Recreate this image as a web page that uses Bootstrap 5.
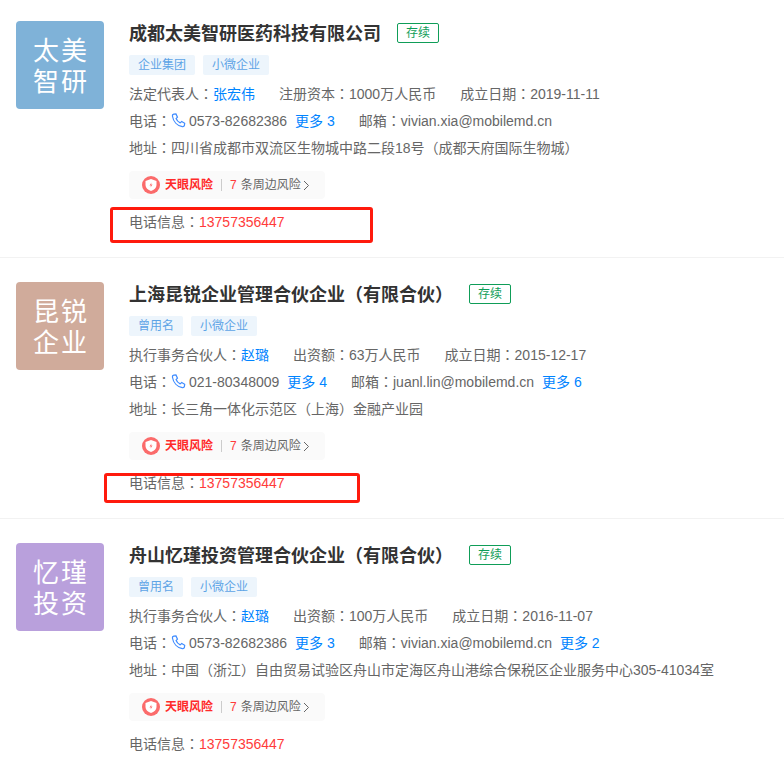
<!DOCTYPE html>
<html lang="zh-CN">
<head>
<meta charset="utf-8">
<title>企业列表</title>
<link href="https://cdn.jsdelivr.net/npm/bootstrap@5.3.0/dist/css/bootstrap.min.css" rel="stylesheet">
<style>
html,body{background:#fff;}
body{font-family:"Liberation Sans","Noto Sans CJK SC",sans-serif;font-size:14px;color:#666;overflow:hidden;height:777px;}
.cp{font-family:"Noto Sans CJK TC",sans-serif;line-height:0;}
.pa{font-family:"Noto Sans CJK KR",sans-serif;line-height:0;}
.co-list{margin-top:-3px;}
.co-item{position:relative;padding:24px 16px 0 16px;height:261px;border-bottom:1px solid #f2f2f2;}
.co-logo{width:88px;height:88px;border-radius:4px;color:#fff;font-size:26px;line-height:31px;letter-spacing:2px;padding:15px 0 0 2px;text-align:center;flex:none;}
.logo-blue{background:#7fb2d8;}
.logo-tan{background:#d0ab9b;}
.logo-purple{background:#b9a0dc;}
.co-main{margin-left:25px;min-width:0;}
.co-title{font-size:18px;font-weight:700;color:#333;line-height:24px;height:24px;margin:1px 0 -1px;white-space:nowrap;}
.co-status{border:1px solid #0f9d58;color:#0f9d58;font-size:12px;line-height:18px;height:20px;padding:0 8px;border-radius:2px;margin-left:16px;margin-top:2px;}
.co-tags{margin-top:10px;gap:8px;}
.co-tag{background:#edf5fc;color:#5ea4e6;font-size:12px;line-height:20px;height:20px;padding:0 9px;border-radius:2px;}
.co-line{line-height:27px;height:27px;white-space:nowrap;}
.co-lines{margin-top:6px;}
.co-gap{margin-left:24px;}
.co-more{margin-left:8px;}
.co-line a,.co-more{color:#0084ff;text-decoration:none;}
.ico-phone{width:15px;height:15px;vertical-align:-2px;margin-right:3px;}
.co-risk{display:inline-flex;align-items:center;height:28px;width:196px;margin-top:9px;padding-left:13px;background:#fafafa;border-radius:4px;font-size:12px;color:#666;}
.risk-name{color:#ff2a2a;font-weight:700;margin-left:5px;}
.risk-sep{width:1px;height:12px;background:#ccc;margin:0 8px;}
.risk-num{color:#ff3b3b;margin-right:4px;}
.risk-chev{width:7px;height:11px;margin-left:2px;}
.co-phone{line-height:20px;margin-top:12px;}
.co-phone span.cv{color:#ff3b3b;}
.mark-box{position:absolute;border:3px solid #ff1a0d;border-radius:3px;pointer-events:none;}
.mark-one{left:110px;top:210px;width:263px;height:36px;}
.mark-two{left:104px;top:215px;width:256px;height:30px;}
</style>
</head>
<body>
<div class="co-list">

<div class="co-item d-flex">
  <div class="co-logo logo-blue">太美<br>智研</div>
  <div class="co-main">
    <div class="d-flex align-items-start"><h2 class="co-title">成都太美智研医药科技有限公司</h2><span class="co-status">存续</span></div>
    <div class="co-tags d-flex"><span class="co-tag">企业集团</span><span class="co-tag">小微企业</span></div>
    <div class="co-lines">
      <div class="co-line">法定代表人<span class="cp" lang="zh-TW">：</span><a href="#">张宏伟</a><span class="co-gap">注册资本<span class="cp" lang="zh-TW">：</span>1000万人民币</span><span class="co-gap">成立日期<span class="cp" lang="zh-TW">：</span>2019-11-11</span></div>
      <div class="co-line">电话<span class="cp" lang="zh-TW">：</span><svg class="ico-phone" viewBox="0 0 16 16" fill="none" stroke="#3f8cff" stroke-width="1.3"><path d="M3 1.2 5.3 1l1.6 3.4-1.5 1.5c.7 1.900 2.300 3.600 4.400 4.600l1.600-1.400 3.200 1.900-.3 2.300c-.2.9-1.200 1.500-2.200 1.300C6.700 13.500 2.400 9 1.500 3.200 1.400 2.200 2 1.400 3 1.200Z"/></svg>0573-82682386<a class="co-more" href="#">更多 3</a><span class="co-gap">邮箱<span class="cp" lang="zh-TW">：</span>vivian.xia@mobilemd.cn</span></div>
      <div class="co-line">地址<span class="cp" lang="zh-TW">：</span>四川省成都市双流区生物城中路二段18号<span class="pa" lang="ko">（</span>成都天府国际生物城<span class="pa" lang="ko">）</span></div>
    </div>
    <div class="co-risk"><svg width="18" height="18" viewBox="0 0 18 18"><circle cx="9" cy="9" r="9" fill="#fb6b6b"/><path d="M9 3 14.500 5v4c0 3-2.400 4.900-5.500 6C5.900 13.900 3.500 12 3.500 9V5Z" fill="#fff"/><path d="M9.500 6.500 7.500 9.500H9L8.500 11.500 10.500 8.500H9Z" fill="#fb6b6b"/></svg><span class="risk-name">天眼风险</span><i class="risk-sep"></i><span class="risk-num">7</span>条周边风险<svg class="risk-chev" viewBox="0 0 7 11" fill="none" stroke="#666"><path d="M1 1l4.500 4.500L1 10"/></svg></div>
    <div class="co-phone">电话信息<span class="cp" lang="zh-TW">：</span><span class="cv">13757356447</span></div>
  </div>
  <div class="mark-box mark-one"></div>
</div>

<div class="co-item d-flex">
  <div class="co-logo logo-tan">昆锐<br>企业</div>
  <div class="co-main">
    <div class="d-flex align-items-start"><h2 class="co-title">上海昆锐企业管理合伙企业<span class="pa" lang="ko">（</span>有限合伙<span class="pa" lang="ko">）</span></h2><span class="co-status">存续</span></div>
    <div class="co-tags d-flex"><span class="co-tag">曾用名</span><span class="co-tag">小微企业</span></div>
    <div class="co-lines">
      <div class="co-line">执行事务合伙人<span class="cp" lang="zh-TW">：</span><a href="#">赵璐</a><span class="co-gap">出资额<span class="cp" lang="zh-TW">：</span>63万人民币</span><span class="co-gap">成立日期<span class="cp" lang="zh-TW">：</span>2015-12-17</span></div>
      <div class="co-line">电话<span class="cp" lang="zh-TW">：</span><svg class="ico-phone" viewBox="0 0 16 16" fill="none" stroke="#3f8cff" stroke-width="1.3"><path d="M3 1.2 5.3 1l1.6 3.4-1.5 1.5c.7 1.900 2.300 3.600 4.400 4.600l1.600-1.400 3.200 1.900-.3 2.300c-.2.9-1.200 1.500-2.200 1.300C6.700 13.500 2.400 9 1.500 3.200 1.400 2.200 2 1.400 3 1.200Z"/></svg>021-80348009<a class="co-more" href="#">更多 4</a><span class="co-gap">邮箱<span class="cp" lang="zh-TW">：</span>juanl.lin@mobilemd.cn</span><a class="co-more" href="#">更多 6</a></div>
      <div class="co-line">地址<span class="cp" lang="zh-TW">：</span>长三角一体化示范区<span class="pa" lang="ko">（</span>上海<span class="pa" lang="ko">）</span>金融产业园</div>
    </div>
    <div class="co-risk"><svg width="18" height="18" viewBox="0 0 18 18"><circle cx="9" cy="9" r="9" fill="#fb6b6b"/><path d="M9 3 14.500 5v4c0 3-2.400 4.900-5.500 6C5.900 13.900 3.500 12 3.500 9V5Z" fill="#fff"/><path d="M9.500 6.500 7.500 9.500H9L8.500 11.500 10.500 8.500H9Z" fill="#fb6b6b"/></svg><span class="risk-name">天眼风险</span><i class="risk-sep"></i><span class="risk-num">7</span>条周边风险<svg class="risk-chev" viewBox="0 0 7 11" fill="none" stroke="#666"><path d="M1 1l4.500 4.500L1 10"/></svg></div>
    <div class="co-phone">电话信息<span class="cp" lang="zh-TW">：</span><span class="cv">13757356447</span></div>
  </div>
  <div class="mark-box mark-two"></div>
</div>

<div class="co-item d-flex">
  <div class="co-logo logo-purple">忆瑾<br>投资</div>
  <div class="co-main">
    <div class="d-flex align-items-start"><h2 class="co-title">舟山忆瑾投资管理合伙企业<span class="pa" lang="ko">（</span>有限合伙<span class="pa" lang="ko">）</span></h2><span class="co-status">存续</span></div>
    <div class="co-tags d-flex"><span class="co-tag">曾用名</span><span class="co-tag">小微企业</span></div>
    <div class="co-lines">
      <div class="co-line">执行事务合伙人<span class="cp" lang="zh-TW">：</span><a href="#">赵璐</a><span class="co-gap">出资额<span class="cp" lang="zh-TW">：</span>100万人民币</span><span class="co-gap">成立日期<span class="cp" lang="zh-TW">：</span>2016-11-07</span></div>
      <div class="co-line">电话<span class="cp" lang="zh-TW">：</span><svg class="ico-phone" viewBox="0 0 16 16" fill="none" stroke="#3f8cff" stroke-width="1.3"><path d="M3 1.2 5.3 1l1.6 3.4-1.5 1.5c.7 1.900 2.300 3.600 4.400 4.600l1.600-1.400 3.200 1.900-.3 2.300c-.2.9-1.200 1.500-2.200 1.300C6.700 13.500 2.400 9 1.500 3.200 1.400 2.200 2 1.400 3 1.200Z"/></svg>0573-82682386<a class="co-more" href="#">更多 3</a><span class="co-gap">邮箱<span class="cp" lang="zh-TW">：</span>vivian.xia@mobilemd.cn</span><a class="co-more" href="#">更多 2</a></div>
      <div class="co-line">地址<span class="cp" lang="zh-TW">：</span>中国<span class="pa" lang="ko">（</span>浙江<span class="pa" lang="ko">）</span>自由贸易试验区舟山市定海区舟山港综合保税区企业服务中心305-41034室</div>
    </div>
    <div class="co-risk"><svg width="18" height="18" viewBox="0 0 18 18"><circle cx="9" cy="9" r="9" fill="#fb6b6b"/><path d="M9 3 14.500 5v4c0 3-2.400 4.900-5.500 6C5.900 13.900 3.500 12 3.500 9V5Z" fill="#fff"/><path d="M9.500 6.500 7.500 9.500H9L8.500 11.500 10.500 8.500H9Z" fill="#fb6b6b"/></svg><span class="risk-name">天眼风险</span><i class="risk-sep"></i><span class="risk-num">7</span>条周边风险<svg class="risk-chev" viewBox="0 0 7 11" fill="none" stroke="#666"><path d="M1 1l4.500 4.500L1 10"/></svg></div>
    <div class="co-phone">电话信息<span class="cp" lang="zh-TW">：</span><span class="cv">13757356447</span></div>
  </div>
</div>

</div>
<script src="https://cdn.jsdelivr.net/npm/bootstrap@5.3.0/dist/js/bootstrap.bundle.min.js"></script>
</body>
</html>
